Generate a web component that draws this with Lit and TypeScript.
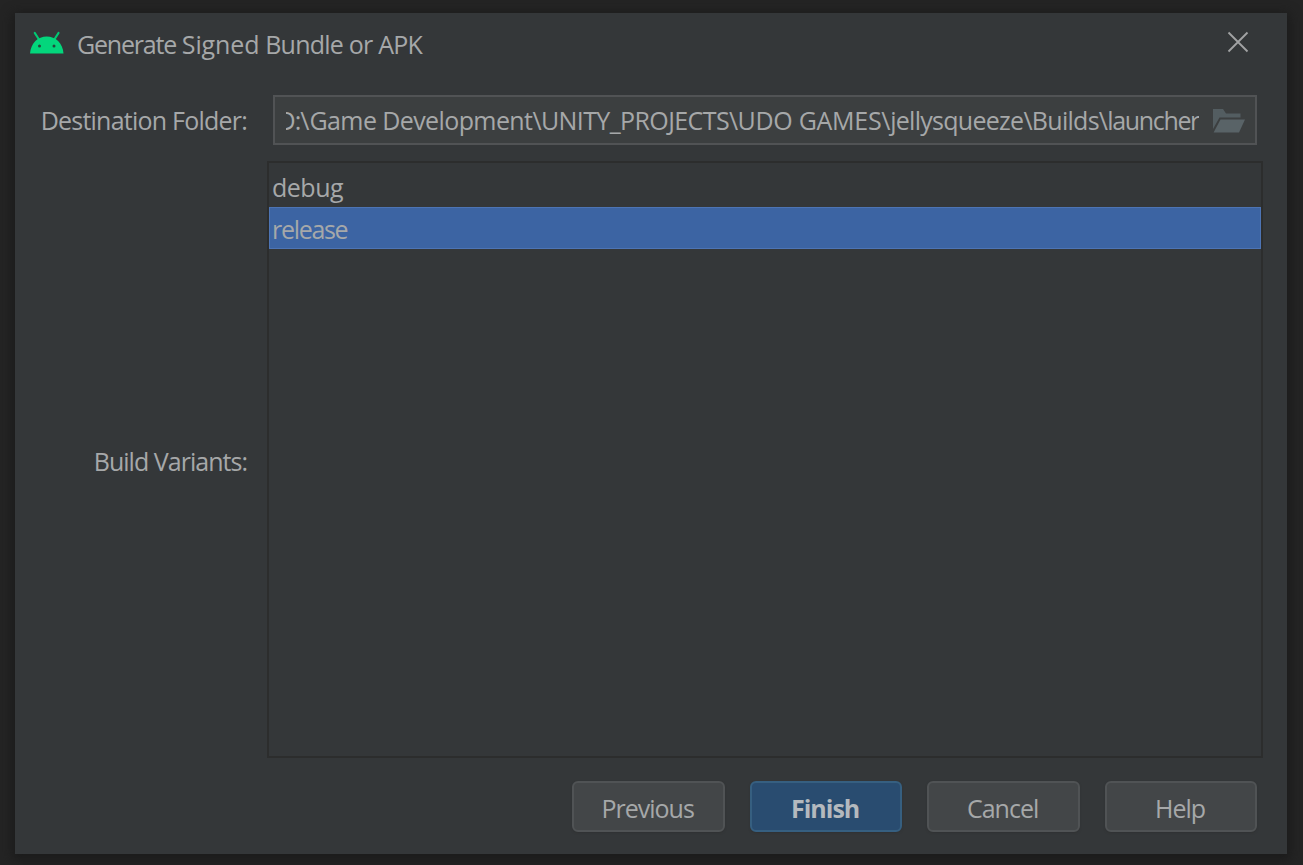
import { LitElement, html, css } from "lit";
import { customElement, state } from "lit/decorators.js";
import { classMap } from "lit/directives/class-map.js";

@customElement("app-root")
export class AppRoot extends LitElement {
  @state() private variant = "release";

  static styles = css`
    :host {
      display: block;
      box-sizing: border-box;
      width: 1303px;
      height: 865px;
      padding: 13px 16px 11px 15px;
      background: #242424;
      overflow: hidden;
      font: 25px/34px "Open Sans", "Noto Sans", sans-serif;
      letter-spacing: -0.5px;
      color: #a6a8a9;
      white-space: nowrap;
    }
    .dialog {
      box-sizing: border-box;
      height: 841px;
      background: #343739;
      box-shadow: 0 3px 10px 3px #1b1b1b;
      display: flex;
      flex-direction: column;
    }
    .titlebar {
      display: flex;
      align-items: center;
      height: 62px;
      padding: 0 38px 0 14px;
    }
    .logo { width: 36px; height: 24px; margin-top: -3px; }
    .title { flex: 1; margin-left: 12px; letter-spacing: -0.76px; }
    .first-word { letter-spacing: -1.2px; }
    .second-word { letter-spacing: -0.1px; }
    .close { width: 22px; height: 22px; margin-top: -4px; }
    .row { display: flex; }
    .label {
      width: 232px;
      text-align: right;
      flex: none;
      letter-spacing: -0.77px;
    }
    .folder { height: 50px; margin-top: 20px; align-items: center; }
    .field {
      box-sizing: border-box;
      margin-left: 26px;
      width: 984px;
      height: 50px;
      border: 2px solid #515355;
      background: #3c3f40;
      display: flex;
      align-items: center;
      padding: 0 10px 0 11px;
    }
    .path {
      width: 913px;
      display: flex;
      justify-content: flex-end;
      overflow: hidden;
    }
    .tight { letter-spacing: -0.6px; }
    .tighter { letter-spacing: -0.72px; }
    .tightest { letter-spacing: -1.34px; }
    .loose { letter-spacing: -0.3px; }
    .drive { letter-spacing: -1px; margin-right: 1px; }
    .browse { width: 32px; height: 24px; margin: 2px 0 0 14px; flex: none; }
    .variants { height: 597px; margin-top: 16px; align-items: center; }
    .variants .label { letter-spacing: -0.97px; padding-top: 3px; }
    .list {
      box-sizing: border-box;
      margin-left: 20px;
      width: 996px;
      height: 597px;
      border: 2px solid #2c2d2d;
      padding-top: 3px;
    }
    .item {
      box-sizing: border-box;
      height: 41px;
      padding: 4px 3px 0;
    }
    .item.selected {
      height: 42px;
      background: #3c64a3;
      border: 1px solid #4d74b4;
      padding: 4px 2px 0;
      letter-spacing: -1.3px;
    }
    .buttons {
      display: flex;
      justify-content: flex-end;
      gap: 24.8px;
      margin-top: 23px;
      padding-right: 29.8px;
    }
    .button {
      box-sizing: border-box;
      width: 152.7px;
      height: 51px;
      border: 2px solid #505355;
      border-radius: 6px;
      background: #434648;
      display: flex;
      align-items: center;
      justify-content: center;
      padding: 2px 1.5px 0 0;
      box-shadow: 0 1px 2px #303233;
      letter-spacing: -1px;
    }
    .primary {
      background: #294c70;
      border-color: #365f80;
      font-weight: 700;
      color: #b4b9be;
    }
  `;

  render() {
    return html`
      <div class="dialog">
        <div class="titlebar">
          <svg class="logo" viewBox="0 0 36 24">
            <path d="M5.800 2 10 8.500M29.500 2 25.300 8.500" stroke="#00c974" stroke-width="2.200" stroke-linecap="round" />
            <path d="M1 22.500C1.800 12 9 5.500 17.700 5.500S33.800 12 34.500 22.500z" fill="#03d67c" />
            <circle cx="10.500" cy="15" r="1.500" fill="#24483b" />
            <circle cx="25" cy="15" r="1.500" fill="#24483b" />
          </svg>
          <span class="title"><span class="first-word">Generate</span> <span class="second-word">Signed</span> Bundle or APK</span>
          <svg class="close" viewBox="0 0 22 22">
            <path d="M1.500 1.500 20.500 20.500M20.500 1.500 1.500 20.500" stroke="#a2a3a4" stroke-width="1.800" />
          </svg>
        </div>
        <div class="row folder">
          <span class="label">Destination Folder:</span>
          <div class="field">
            <div class="path"><span><span class="drive">D:\\</span><span class="tight">Game Development\\UNITY_PROJECTS\\</span><span class="loose">UDO GAMES\\</span><span class="tighter">jellysqueeze\\Builds\\</span><span class="tightest">launcher</span></span></div>
            <svg class="browse" viewBox="0 0 32 24">
              <path d="M0 23V0h10l3 4.500h14.500V8.500H6.500L0 20z" fill="#535d61" />
              <path d="M7.500 10.500H32L26 23.500H.6z" fill="#596367" />
            </svg>
          </div>
        </div>
        <div class="row variants">
          <span class="label">Build Variants:</span>
          <div class="list">
            ${["debug", "release"].map(
              (v) => html`<div
                class=${classMap({ item: true, selected: v === this.variant })}
                @click=${() => (this.variant = v)}
              >${v}</div>`
            )}
          </div>
        </div>
        <div class="buttons">
          ${["Previous", "Finish", "Cancel", "Help"].map(
            (b) => html`<div class=${classMap({ button: true, primary: b === "Finish" })}>${b}</div>`
          )}
        </div>
      </div>
    `;
  }
}
